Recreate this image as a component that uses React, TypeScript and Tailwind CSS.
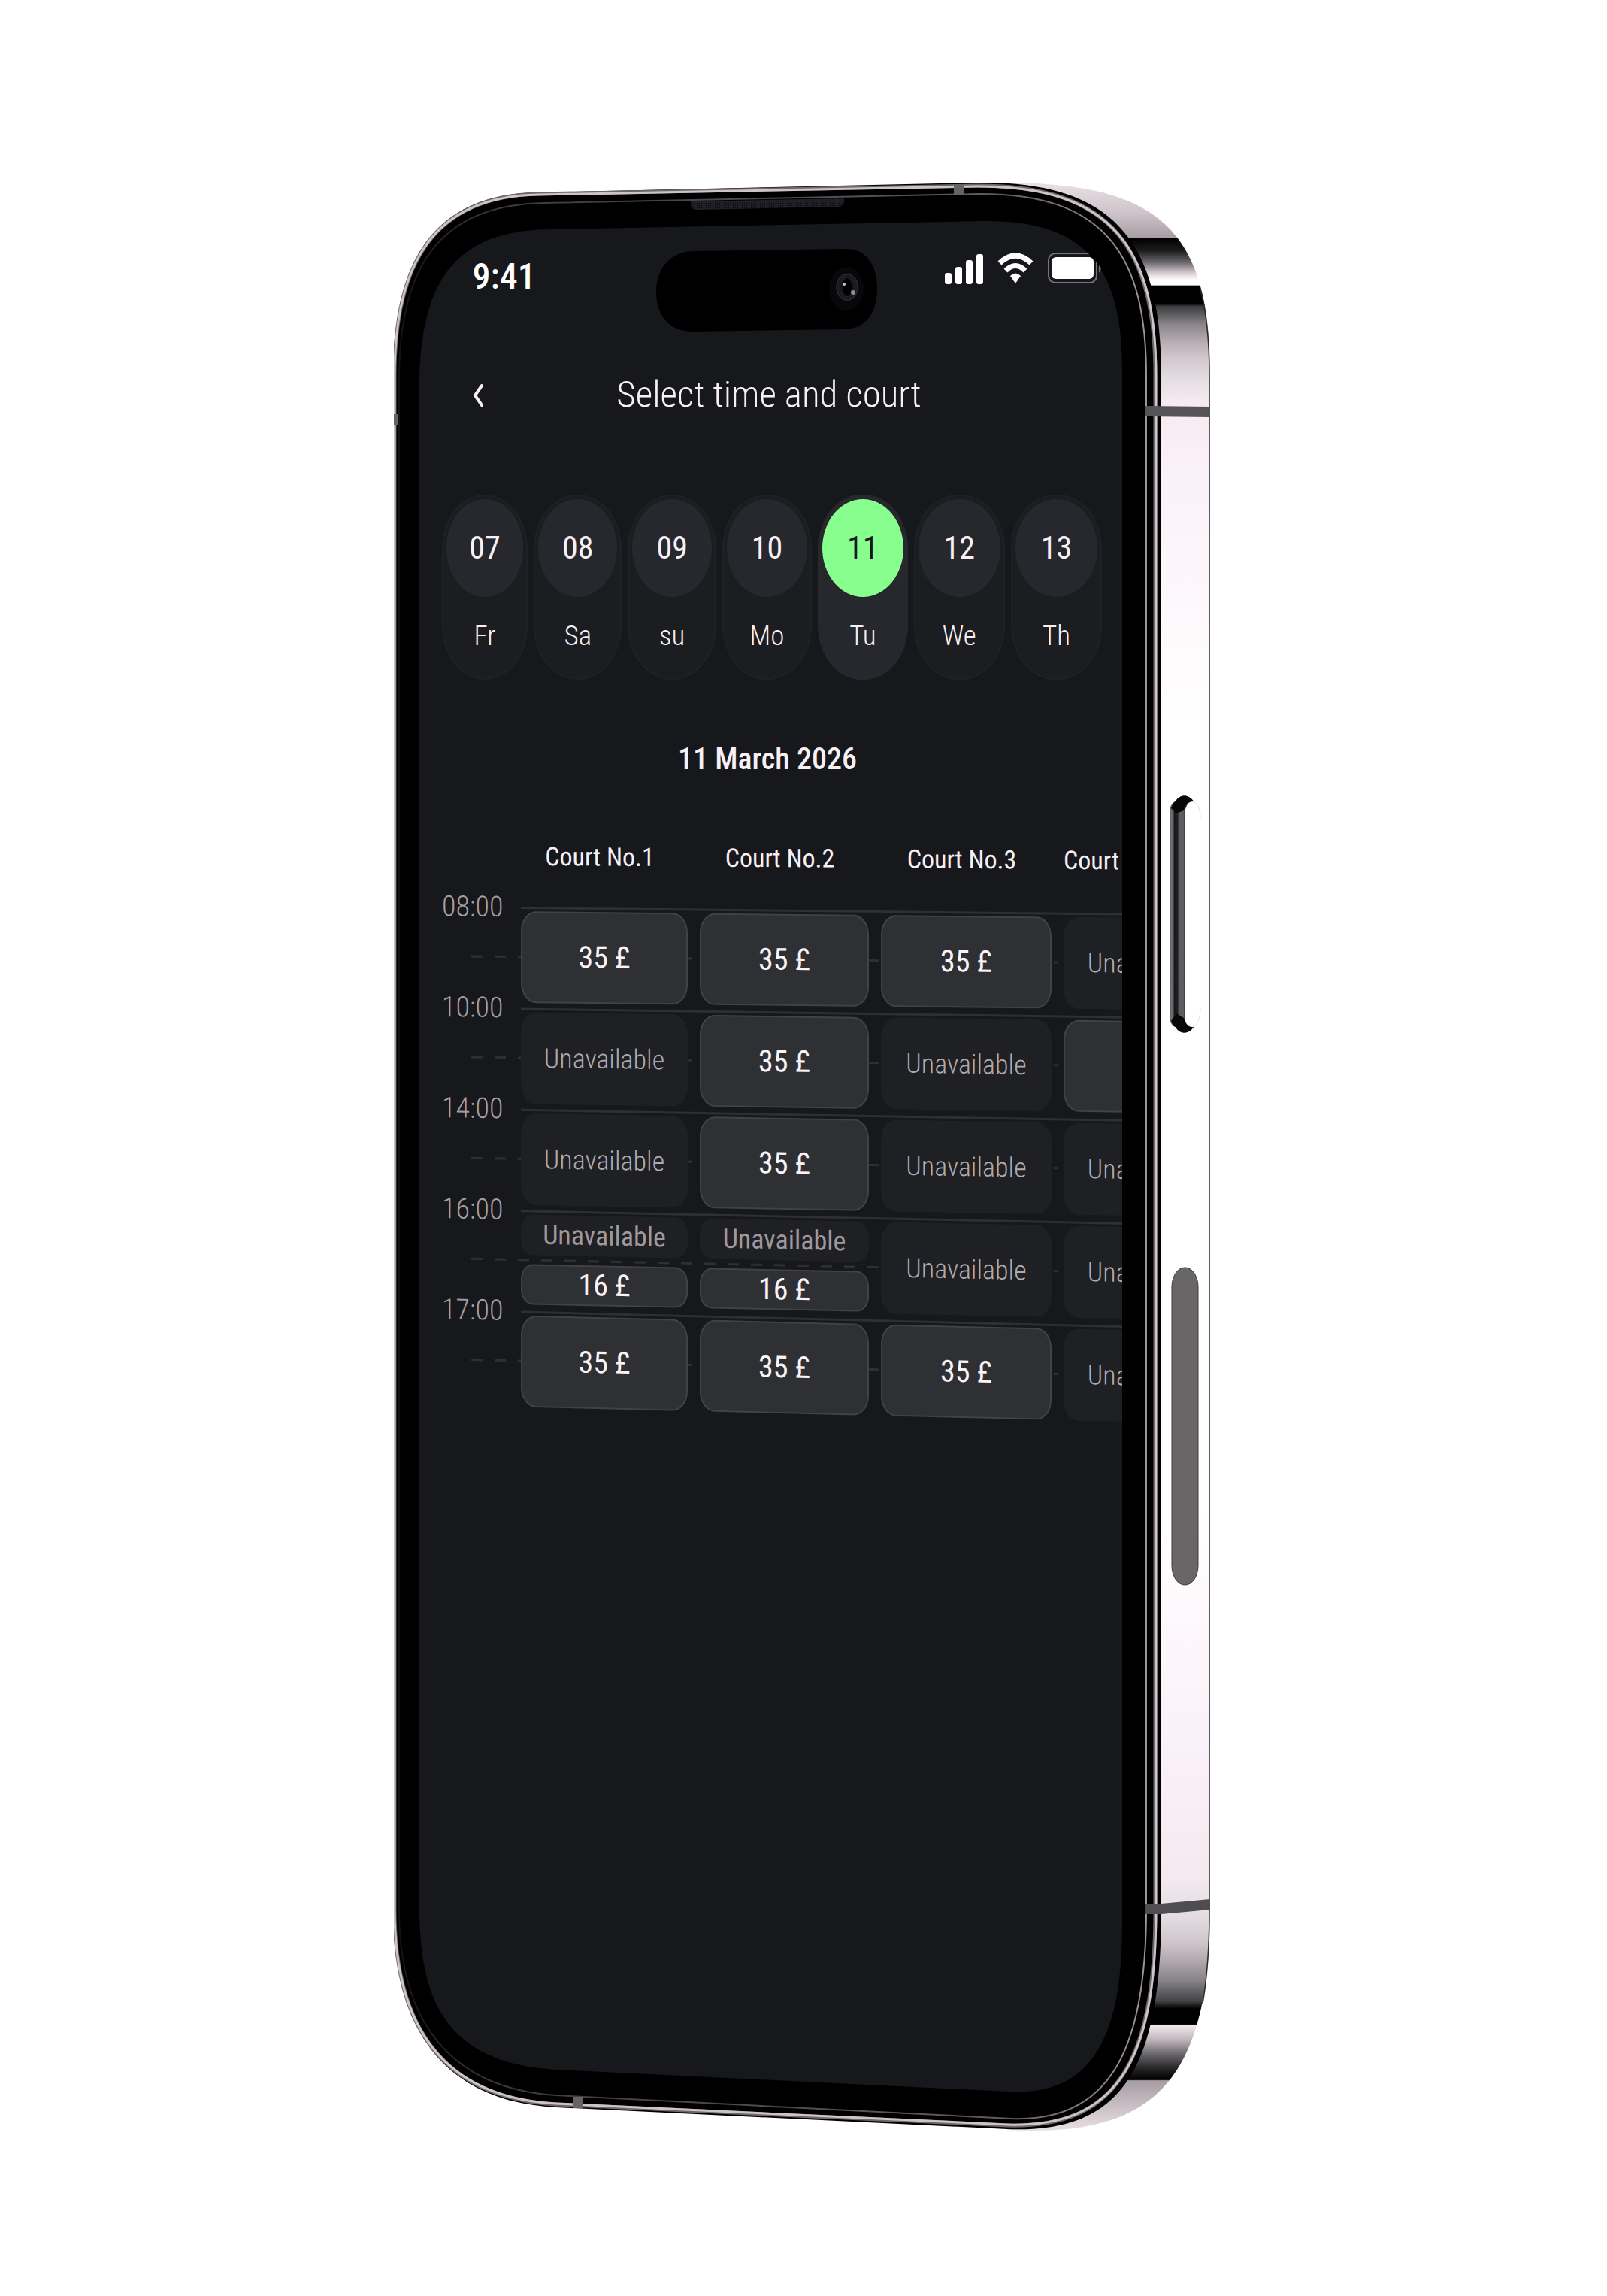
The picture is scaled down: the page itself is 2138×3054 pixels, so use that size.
import { clsx } from 'clsx';

type Slot = string | null;

const days = [
  { date: '07', day: 'Fr' },
  { date: '08', day: 'Sa' },
  { date: '09', day: 'su' },
  { date: '10', day: 'Mo' },
  { date: '11', day: 'Tu', active: true },
  { date: '12', day: 'We' },
  { date: '13', day: 'Th' },
];

const courts = ['Court No.1', 'Court No.2', 'Court No.3', 'Court No.4'];

// Each cell holds one full slot or two half slots, null means unavailable
const rows: { time: string; tilt: string; cells: Slot[][] }[] = [
  { time: '08:00', tilt: 'skew-y-[0.6deg]', cells: [['35 £'], ['35 £'], ['35 £'], [null]] },
  { time: '10:00', tilt: 'skew-y-[0.8deg]', cells: [[null], ['35 £'], [null], ['35 £']] },
  { time: '14:00', tilt: 'skew-y-1', cells: [[null], ['35 £'], [null], [null]] },
  { time: '16:00', tilt: 'skew-y-[1.2deg]', cells: [[null, '16 £'], [null, '16 £'], [null], [null]] },
  { time: '17:00', tilt: 'skew-y-[1.4deg]', cells: [['35 £'], ['35 £'], ['35 £'], [null]] },
];

function PhoneFrame() {
  return (
    <svg viewBox="524 242 1087 2593" className="absolute inset-0 w-full h-full" aria-hidden="true">
      <defs>
        <linearGradient id="side" gradientUnits="userSpaceOnUse" x1="1560" y1="243" x2="1560" y2="2835">
          <stop offset="0" stopColor="#e9e1e6" />
          <stop offset="0.016" stopColor="#cdc2c8" />
          <stop offset="0.028" stopColor="#a89ea4" />
          <stop offset="0.0285" stopColor="#000" />
          <stop offset="0.035" stopColor="#1d1d20" />
          <stop offset="0.041" stopColor="#6d6a6e" />
          <stop offset="0.0465" stopColor="#d9ced4" />
          <stop offset="0.05" stopColor="#fff" />
          <stop offset="0.0525" stopColor="#fff" />
          <stop offset="0.053" stopColor="#000" />
          <stop offset="0.062" stopColor="#000" />
          <stop offset="0.0635" stopColor="#3c3b3d" />
          <stop offset="0.073" stopColor="#8c888d" />
          <stop offset="0.082" stopColor="#b9aeb4" />
          <stop offset="0.09" stopColor="#d1c7cd" />
          <stop offset="0.1" stopColor="#e2dce0" />
          <stop offset="0.112" stopColor="#f4eaf0" />
          <stop offset="0.15" stopColor="#fbf1f8" />
          <stop offset="0.28" stopColor="#fff" />
          <stop offset="0.68" stopColor="#fff" />
          <stop offset="0.8" stopColor="#fbf1f8" />
          <stop offset="0.87" stopColor="#f3e9ef" />
          <stop offset="0.89" stopColor="#e3dde1" />
          <stop offset="0.903" stopColor="#cfc5ca" />
          <stop offset="0.913" stopColor="#b0a7ad" />
          <stop offset="0.923" stopColor="#838086" />
          <stop offset="0.933" stopColor="#444346" />
          <stop offset="0.937" stopColor="#000" />
          <stop offset="0.945" stopColor="#000" />
          <stop offset="0.9455" stopColor="#f4eaf0" />
          <stop offset="0.953" stopColor="#bfb4ba" />
          <stop offset="0.96" stopColor="#6e6b70" />
          <stop offset="0.967" stopColor="#2b2b2e" />
          <stop offset="0.9735" stopColor="#000" />
          <stop offset="0.974" stopColor="#a69da3" />
          <stop offset="0.985" stopColor="#c4b9bf" />
          <stop offset="1" stopColor="#e9e0e5" />
        </linearGradient>
        <linearGradient id="bezel" gradientUnits="userSpaceOnUse" x1="524" y1="0" x2="1530" y2="0">
          <stop offset="0" stopColor="#121214" />
          <stop offset="0.15" stopColor="#3c3a3c" />
          <stop offset="0.8" stopColor="#5f5b5e" />
          <stop offset="1" stopColor="#9d959b" />
        </linearGradient>
        <linearGradient id="button" gradientUnits="userSpaceOnUse" x1="1556" y1="0" x2="1577" y2="0">
          <stop offset="0" stopColor="#2a2a2c" />
          <stop offset="0.08" stopColor="#716d6f" />
          <stop offset="0.22" stopColor="#6b6869" />
          <stop offset="0.3" stopColor="#17181b" />
          <stop offset="0.52" stopColor="#202125" />
          <stop offset="0.6" stopColor="#5f5c5f" />
          <stop offset="0.88" stopColor="#5f5c5f" />
          <stop offset="1" stopColor="#1c1c1e" />
        </linearGradient>
        <radialGradient id="lens">
          <stop offset="0" stopColor="#050506" />
          <stop offset="0.7" stopColor="#1d1e22" />
          <stop offset="1" stopColor="#08080a" />
        </radialGradient>
        <pattern id="mesh" width="3" height="3" patternUnits="userSpaceOnUse">
          <rect width="3" height="3" fill="#1f1f26" />
          <rect width="1" height="1" fill="#08080a" />
        </pattern>
      </defs>

      {/* Side of the body */}
      <path
        d="M1300 243C1530 238 1610 290 1610 500V2540C1610 2785 1520 2842 1340 2833Z"
        fill="url(#side)"
      />
      <path d="M1597 385C1605 415 1609 450 1609 500V2540C1609 2590 1606 2630 1600 2665" fill="none" stroke="#2b292b" strokeWidth="1.5" />

      {/* Front glass and its polished edges */}
      <path
        d="M524 500C524 350 575 258 715 256L1300 243C1490 240 1545 330 1545 500V2540C1545 2756 1490 2838 1340 2832L740 2803C590 2795 524 2700 524 2540Z"
        fill="#000"
      />
      <path
        d="M525 500C525 351 576 261 716 258L1300 247C1483 246 1537 335 1537 500V2540C1537 2745 1484 2831 1340 2827L740 2799C592 2791 525 2699 525 2540Z"
        fill="none"
        stroke="#6d686c"
        strokeWidth="5"
      />
      <path
        d="M525 500C525 351 576 261 716 259L1300 248C1484 247 1538 335 1538 500V2540C1538 2745 1484 2830 1340 2826L740 2798C592 2790 525 2699 525 2540Z"
        fill="none"
        stroke="#cdc3c9"
        strokeWidth="3"
      />
      <path
        d="M531 505C531 360 580 272 725 270L1300 258C1475 256 1525 345 1525 500V2540C1525 2737 1470 2823 1345 2818L740 2787C600 2778 531 2690 531 2540Z"
        fill="none"
        stroke="url(#bezel)"
        strokeWidth="2"
      />

      {/* Screen */}
      <path
        d="M558 520C558 380 600 305 735 305L1305 294C1440 292 1493 350 1493 490V2560C1493 2730 1440 2788 1340 2782L740 2753C610 2745 558 2680 558 2540Z"
        fill="#17181c"
      />

      {/* Antenna bands */}
      <path d="M1524 540L1610 541V555L1524 554Z" fill="#565356" />
      <path d="M1524 2532H1545L1610 2526V2540L1545 2546H1524Z" fill="#504d50" />
      <path d="M1269 245H1282V259H1269ZM763 2789H775V2804H763ZM523 551H529V565H523Z" fill="#656366" />

      {/* Earpiece */}
      <path d="M919 268L1123 264V269Q1122 274 1116 275L926 279Q920 278 919 273Z" fill="url(#mesh)" />

      {/* Camera island */}
      <path
        d="M921 334L1126 331C1152 331 1167 352 1167 384C1167 417 1151 438 1122 438L921 441C891 441 873 420 873 388C873 356 893 335 921 334Z"
        fill="#000"
      />
      <ellipse cx="1126" cy="384" rx="23" ry="29" fill="#08080a" />
      <ellipse cx="1127" cy="382" rx="16" ry="19" fill="url(#lens)" />
      <ellipse cx="1127" cy="382" rx="14" ry="17" fill="none" stroke="#2a2c31" strokeWidth="1.5" />
      <ellipse cx="1127" cy="382" rx="6" ry="12" fill="#000" />
      <circle cx="1123" cy="378" r="2" fill="#c9c9cd" />
      <circle cx="1135" cy="389" r="3" fill="#8f8d93" />

      {/* Power button */}
      <path
        d="M1556 1080C1556 1072 1560 1067 1564 1066C1569 1056 1582 1056 1588 1066C1580 1065 1576 1074 1576 1086V1352C1576 1360 1580 1367 1588 1366C1582 1376 1569 1376 1564 1366C1559 1364 1556 1360 1556 1352Z"
        fill="url(#button)"
      />
      <path d="M1558 1075Q1560 1068 1564 1066C1569 1056 1582 1056 1588 1066C1580 1064 1577 1070 1575 1078L1565 1082ZM1558 1358Q1560 1365 1564 1366C1569 1376 1582 1376 1588 1366C1580 1367 1577 1362 1575 1354L1565 1348Z" fill="#08080a" />
      <path d="M1586 1066C1593 1067 1597 1076 1597 1088M1597 1340C1597 1355 1593 1364 1586 1366" fill="none" stroke="#e6dde2" strokeWidth="1" />

      {/* SIM slot */}
      <rect x="1559" y="1686" width="35" height="422" rx="17" ry="26" fill="#696667" stroke="#3e3b3e" strokeWidth="1" />
    </svg>
  );
}

function StatusIcons() {
  return (
    <svg viewBox="0 0 209 64" className="w-[209px] h-16" role="img" aria-label="Signal, Wi-Fi, battery">
      <g fill="#fff">
        <rect x="0" y="27" width="9" height="15" rx="3" />
        <rect x="14" y="19" width="9" height="23" rx="3" />
        <rect x="28" y="10" width="9" height="32" rx="3" />
        <rect x="42" y="2" width="9" height="40" rx="3" />
        <path d="M94 41L87 31Q94 24 101 31Z" />
        <rect x="142" y="6" width="56" height="29" rx="6" />
      </g>
      <g fill="none" stroke="#fff" strokeWidth="7">
        <path d="M73 14Q94 -6 115 14" />
        <path d="M81 24Q94 11 107 24" />
      </g>
      <rect x="138" y="1" width="64" height="39" rx="9" fill="none" stroke="#77757a" strokeWidth="2" />
      <path d="M205 15Q208 17 208 20T205 27Z" fill="#77757a" />
    </svg>
  );
}

function SlotButton({ price, half }: { price: Slot; half: boolean }) {
  return (
    <button
      type="button"
      disabled={!price}
      className={clsx(
        'relative block w-full border-2',
        half ? 'h-[54px] rounded-[16px/20px]' : 'h-[122px] rounded-[20px/26px]',
        price
          ? 'bg-[#2f3034] border-[#414247] text-[#fbf3f7] text-[40px] leading-[48px]'
          : 'bg-[#1f2024] border-[#1f2024] text-[36px] leading-[48px]',
        !price && (half ? 'text-[#9f989d]' : 'font-light text-[#b0a9ae]')
      )}
    >
      {price ?? 'Unavailable'}
    </button>
  );
}

export default function App() {
  return (
    <main className="min-h-screen bg-white flex items-start justify-center pt-[242px] pr-1 pb-20 font-['Roboto_Condensed',Roboto,sans-serif] text-[#f8f0f4]">
      <div className="relative w-[1087px] aspect-[1087/2593] pt-[52px] pl-[34px] pr-[118px]">
        <PhoneFrame />

        <div className="relative overflow-hidden rounded-[150px] pb-[800px]">
          {/* Status bar */}
          <div className="flex items-center justify-between pt-[42px] pl-[71px] pr-[27px]">
            <span className="text-[48px] leading-16 font-medium text-white">9:41</span>
            <StatusIcons />
          </div>

          {/* Nav bar */}
          <header className="mt-[93px] flex items-center pl-14 pr-16">
            <button type="button" aria-label="Back" className="w-11 h-16 flex items-center justify-center">
              <svg viewBox="0 0 16 32" className="w-4 h-8" fill="none" stroke="#f8f0f4" strokeWidth="4" strokeLinecap="round" strokeLinejoin="round">
                <path d="M13 4L4 17L13 30" />
              </svg>
            </button>
            <h1 className="flex-1 pr-10 text-center text-[49px] leading-16 font-light">Select time and court</h1>
          </header>

          {/* Week picker */}
          <div className="mt-[101px] pl-[30px] pr-[26px] grid grid-cols-[115fr_117fr_118fr_119fr_120fr_121fr_122fr] gap-2">
            {days.map((d) => (
              <button
                key={d.date}
                type="button"
                aria-pressed={!!d.active}
                className={clsx(
                  'h-[246px] p-1 flex flex-col items-center border-2 rounded-[58px/72px]',
                  d.active ? 'bg-[#27282d] border-[#27282d]' : 'bg-[#1c1d21] border-[#202125]'
                )}
              >
                <span
                  className={clsx(
                    'w-full h-[130px] flex items-center justify-center rounded-[50%] text-[42px] leading-[48px]',
                    d.active ? 'bg-[#87fe8d] text-[#17181c]' : 'bg-[#27282d]'
                  )}
                >
                  {d.date}
                </span>
                <span className="mt-7 text-[37px] leading-[48px] font-light">{d.day}</span>
              </button>
            ))}
          </div>

          <h2 className="mt-[82px] pr-2 text-center text-[40px] leading-[48px] font-medium">11 March 2026</h2>

          {/* Timetable */}
          <table className="mt-20 ml-[30px] w-[1067px] table-fixed border-separate border-spacing-0">
            <colgroup>
              <col className="w-[105px]" />
              <col className="w-[238px]" />
              <col className="w-[241px]" />
              <col className="w-[243px]" />
              <col className="w-[240px]" />
            </colgroup>
            <thead>
              <tr className="origin-top-left skew-y-[0.4deg]">
                <td className="p-0" />
                {courts.map((court) => (
                  <th
                    key={court}
                    scope="col"
                    className="h-[91px] p-0 pr-7 align-top text-[34px] leading-[48px] font-normal last:text-left"
                  >
                    {court}
                  </th>
                ))}
              </tr>
            </thead>
            <tbody>
              {rows.map((row) => (
                <tr key={row.time} className={clsx('relative origin-top-left', row.tilt)}>
                  <th scope="row" className="p-0 align-top text-left text-[38px] font-light text-[#a49da2]">
                    <span className="h-0 flex items-center">{row.time}</span>
                    <span className="absolute top-[65px] left-[39px] w-[780px] h-[3px] bg-[repeating-linear-gradient(90deg,#2e2f34_0_15px,transparent_15px_31px)]" />
                  </th>
                  {row.cells.map((slots, i) => (
                    <td key={courts[i]} className="h-[134px] p-0 pt-[3px] pr-4 align-top border-t-3 border-[#2e2f34]">
                      <div className="flex flex-col gap-3">
                        {slots.map((price, j) => (
                          <SlotButton key={j} price={price} half={slots.length > 1} />
                        ))}
                      </div>
                    </td>
                  ))}
                </tr>
              ))}
            </tbody>
          </table>
        </div>
      </div>
    </main>
  );
}
